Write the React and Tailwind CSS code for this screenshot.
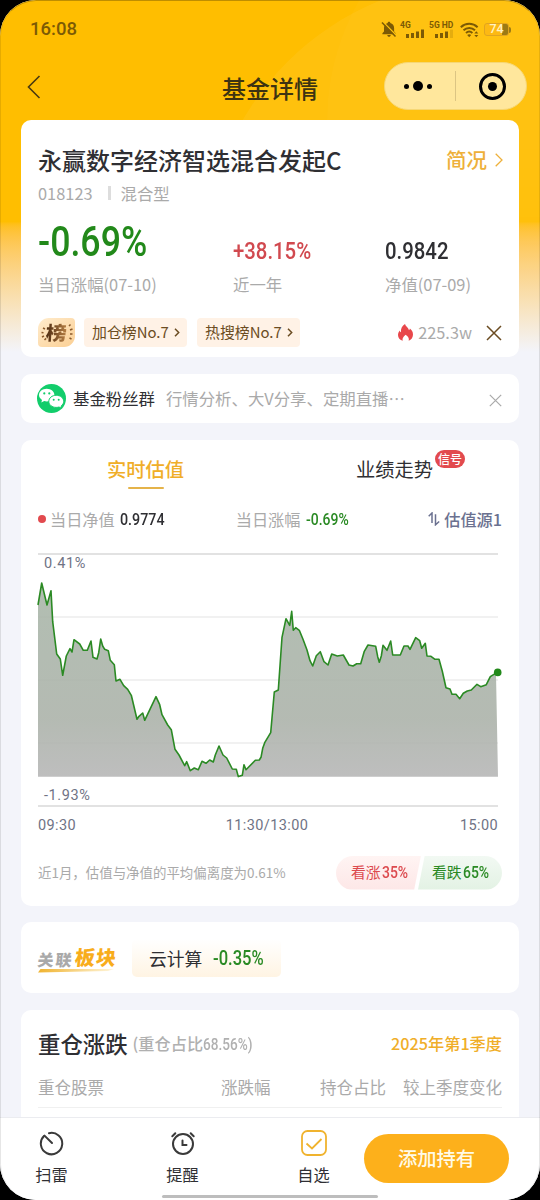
import clsx from 'clsx';

const GRID_LINES = [0, 63, 126, 189, 252];

const CHART_POINTS = [
  [0, 51], [3.7, 29], [9, 51], [13, 36.7], [14.7, 67.7], [18.7, 100], [22.3, 105], [24.7, 121.3],
  [28.3, 102], [32, 94.7], [34, 98], [36, 85.7], [41.7, 90], [45.3, 96.3], [49.3, 96.3], [53, 87],
  [55, 103.3], [59, 105], [60.7, 98.7], [62.7, 85], [64.7, 92], [66.7, 95.3], [70.3, 96.7], [72.3, 106.3],
  [76.3, 110.7], [78, 127], [82, 125.3], [85.7, 131.7], [89.7, 135.3], [93.3, 141.3], [99, 165.3],
  [101, 162.3], [104.7, 159], [106.7, 166.3], [118, 142.7], [121.7, 150.7], [124, 160.7], [129.7, 171],
  [133.3, 175.7], [137, 195.3], [141, 201], [146.7, 211.7], [148.7, 207.7], [152.3, 216.7], [156.3, 214],
  [160.3, 215.7], [164, 207.3], [168, 209.3], [171.7, 206], [175.3, 208], [177.3, 201], [181, 192],
  [185, 201], [188.7, 204], [194.3, 215], [198.3, 215.3], [200.3, 222.6], [204.3, 221.3], [206, 210.7],
  [208, 215.7], [217.3, 206.3], [221.3, 206], [223, 203.3], [224.7, 194.3], [226.7, 188.7], [232.7, 178.7],
  [236.3, 138], [240.3, 136], [244, 83.3], [248, 64.7], [251.7, 71.3], [253.7, 57.3], [255.3, 76.3],
  [257.7, 73.7], [261.3, 76.3], [265, 85.3], [269, 96], [272, 106.7], [274.7, 112], [278.3, 101.7],
  [282.3, 97.7], [286, 107.7], [290, 111], [293.7, 100], [299.3, 102], [305.3, 101], [311, 111],
  [315, 112], [318.7, 109.7], [322.7, 109.7], [326.3, 97.3], [330, 91], [337.7, 92.3], [339.7, 102.7],
  [341.3, 108.3], [343.3, 102], [345, 91.3], [349, 96.3], [352.7, 87], [354.7, 101], [362.3, 101],
  [366, 92], [370, 92], [372, 95.3], [377.7, 83.7], [381.7, 86.7], [383.7, 94.3], [387.3, 89.3],
  [389, 102], [393, 102.3], [397, 105.3], [401, 105.3], [404.3, 117.3], [408, 133.7], [412, 135],
  [414, 140.3], [418, 140.3], [421.7, 144.7], [425.3, 139.3], [429.3, 137], [433.3, 136], [439, 130.3],
  [442.7, 132.7], [448.3, 130.7], [452.3, 122.7], [457.5, 119.3],
];

const Card = ({ className, children }) => (
  <section className={clsx('mx-[21px] rounded-[10px] bg-white', className)}>{children}</section>
);

// Condensed numerals
const Num = ({ className, children }) => (
  <span className={clsx("inline-block origin-left whitespace-nowrap font-['Roboto'] leading-none", className)}>
    {children}
  </span>
);

const SignalBars = ({ last = 1 }) => (
  <svg width="18" height="9" viewBox="0 0 18 9" fill="#7c5a05">
    <rect x="0" y="5" width="3" height="4" />
    <rect x="5" y="4" width="3" height="5" />
    <rect x="10" y="2.5" width="3" height="6.5" />
    <rect x="15" y="0.5" width="3" height="8.5" opacity={last} />
  </svg>
);

const StatusBar = () => (
  <div className="flex h-[60px] items-center justify-between pr-[29px] pb-px pl-[30px] font-['Roboto'] text-[#7c5a05]">
    <span className="text-[18.5px] leading-none font-medium">16:08</span>
    <div className="flex items-center">
      <svg width="16" height="17" viewBox="0 0 16 17" className="mr-[4px]">
        <path d="M8 .8c.8 0 1.3.5 1.3 1.2 2.4.6 3.8 2.4 3.8 5v3.6l1.5 1.7v.9H1.4v-.9L3 10.6V7c0-2.6 1.3-4.4 3.700-5C6.700 1.300 7.200.8 8 .8zM6.300 14h3.400c0 1-.7 1.800-1.700 1.800S6.300 15 6.300 14z" fill="#7c5a05" />
        <path d="M1.500 0.500l14 14" stroke="#ffc30c" strokeWidth="1.500" />
        <path d="M1 1.500l13.500 14" stroke="#7c5a05" strokeWidth="1.500" />
      </svg>
      <div className="flex h-[17px] w-[24px] flex-col justify-between">
        <span className="-ml-[1px] text-[8.5px] leading-[8px] font-bold">4G</span>
        <div className="ml-[5px]"><SignalBars /></div>
      </div>
      <div className="ml-[4px] flex h-[17px] w-[26px] flex-col justify-between whitespace-nowrap">
        <span className="text-[8.5px] leading-[8px] font-bold">5G HD</span>
        <div className="ml-[6px]"><SignalBars last={0.2} /></div>
      </div>
      <svg width="19" height="16" viewBox="0 0 19 16" className="ml-[5px]" fill="none" stroke="#7c5a05" strokeWidth="2">
        <path d="M.8 5.300C5.600.7 12.800.7 17.600 5.300" />
        <path d="M3.500 8.300c3.300-3.100 8.200-3.100 11.500 0" />
        <path d="M6 11c1.900-1.700 4.500-1.700 6.400 0" />
        <path d="M9.200 15.300l-2-2.300c1.200-1 2.800-1 4 0z" fill="#7c5a05" stroke="none" />
        <path d="M16.300 9.300l2 2.300h-4zM16.300 15.300l-2-2.300h4z" fill="#7c5a05" stroke="none" />
      </svg>
      <div className="ml-[5px] flex items-center">
        <div className="flex h-[13px] w-[25px] items-center justify-center rounded-[3px] border border-[#e0a420] bg-linear-to-r from-[#fdb913] from-75% to-[#9c7a14] to-75% text-[12.5px] leading-none font-medium text-[#fff3c4]">
          74
        </div>
        <div className="h-[6px] w-[2px] rounded-r-sm bg-[#9c7a14]" />
      </div>
    </div>
  </div>
);

const NavBar = () => (
  <div className="grid h-[60px] grid-cols-[1fr_auto_1fr] items-center pr-[13px] pl-[27px]">
    <svg width="14" height="24" viewBox="0 0 14 24" fill="none" stroke="#4a3a10" strokeWidth="1.600" className="-mt-[6px]">
      <path d="M12.500 1L1.500 12l11 11" />
    </svg>
    <h1 className="-mt-[4px] mr-[14px] text-[24px] leading-none font-medium text-[#3d3312]">基金详情</h1>
    <div className="-mt-[8px] flex h-[48px] w-[143px] items-center justify-self-end rounded-full border border-[#f6d775] bg-[#ffe79c]">
      <div className="flex flex-1 items-center justify-center gap-[4px] border-r border-[#dcc583] py-[10px] pr-[3px]">
        <i className="size-[5px] rounded-full bg-black" />
        <i className="size-[10px] rounded-full bg-black" />
        <i className="size-[5px] rounded-full bg-black" />
      </div>
      <div className="flex flex-1 justify-center pl-[4px]">
        <div className="flex size-[27px] items-center justify-center rounded-full border-[3px] border-black">
          <i className="size-[9px] rounded-full bg-black" />
        </div>
      </div>
    </div>
  </div>
);

const RankChip = ({ children }) => (
  <div className="flex h-[29px] w-[103px] items-center gap-[5px] rounded-[4px] bg-[#fff2e6] pl-[8px] text-[14.9px] leading-none whitespace-nowrap text-[#6b4c22]">
    {children}
    <svg width="6" height="9" viewBox="0 0 6 9" fill="none" stroke="#6b4c22" strokeWidth="1.500">
      <path d="M1 .7l3.700 3.800L1 8.300" />
    </svg>
  </div>
);

const Cross = ({ size, color, width }) => (
  <svg width={size} height={size} viewBox="0 0 16 16" fill="none" stroke={color} strokeWidth={width}>
    <path d="M1 1l14 14M15 1L1 15" />
  </svg>
);

const FundCard = () => (
  <Card className="h-[237px] px-[17px] pt-[28px]">
    <div className="flex h-[24px] items-center justify-between">
      <h2 className="text-[24px] leading-none font-medium whitespace-nowrap text-[#2f2f33]">永赢数字经济智选混合发起C</h2>
      <div className="-mr-px flex items-center gap-[8px] text-[20.5px] leading-none font-medium text-[#eeb03a]">
        <span className="-mt-[2px]">简况</span>
        <svg width="8" height="14" viewBox="0 0 8 14" fill="none" stroke="#eeb03a" strokeWidth="1.300">
          <path d="M.7.7L7 7 .7 13.300" />
        </svg>
      </div>
    </div>
    <div className="mt-[12px] flex h-[18px] items-center text-[16.4px] leading-none text-[#aaaaaa]">
      018123
      <i className="mr-[10px] ml-[15px] h-[14px] w-[3px] bg-[#dddddd]" />
      混合型
    </div>
    <div className="mt-[15px] grid grid-cols-[195px_152px_1fr]">
      <div className="flex h-[46px] items-end">
        <Num className="scale-x-[0.850] text-[42px] font-medium text-[#22891a]">-0.69%</Num>
      </div>
      <div className="flex h-[46px] items-end">
        <Num className="scale-x-[0.830] text-[24.500px] font-medium text-[#d1494f]">+38.15%</Num>
      </div>
      <div className="flex h-[46px] items-end">
        <Num className="scale-x-[0.830] text-[24.500px] font-medium text-[#2f2f33]">0.9842</Num>
      </div>
    </div>
    <div className="mt-[12px] grid grid-cols-[195px_152px_1fr] text-[16.4px] leading-[18px] text-[#aaaaaa]">
      <span>当日涨幅(07-10)</span>
      <span>近一年</span>
      <span>净值(07-09)</span>
    </div>
    <div className="mt-[25px] flex h-[29px] items-center">
      <div className="relative flex h-[29px] w-[37px] shrink-0 items-center justify-center overflow-hidden rounded-tl-[11px] rounded-tr-[4px] rounded-br-[11px] rounded-bl-[4px] bg-linear-to-br from-[#ffeccd] to-[#fbcf93]">
        <span className="-mt-[2px] -skew-x-3 scale-x-110 bg-linear-to-r from-[#4e2c12] to-[#b98246] bg-clip-text text-[19px] leading-[22px] font-black text-transparent">榜</span>
        <svg width="37" height="29" viewBox="0 0 37 29" className="absolute inset-0" fill="none" stroke="#8a5a2c" strokeWidth="1.500">
          <path d="M5 10l2 1M3.500 14.500l2 .3M4 19l2-1M6.500 22l1.600-1.600M31 8l1.500-1.500M32 12l2.500-1M32 16h2.500M31.500 20l2 1" />
        </svg>
      </div>
      <div className="ml-[9px] flex gap-[10px]">
        <RankChip>加仓榜No.7</RankChip>
        <RankChip>热搜榜No.7</RankChip>
      </div>
      <div className="ml-auto flex items-center text-[16.300px] leading-none text-[#aaaaaa]">
        <svg width="15" height="17" viewBox="0 0 15 17" className="mr-[5px]">
          <path d="M7 0c.6 2.500 3.500 3.500 4 6.300.6-.4.8-1 .9-1.700C13.700 6 15 8 15 10.500c0 3-1.700 5.300-4.300 6.300.7-2.300-.5-4.300-3.200-6-1.600 1.800-3.700 3.600-2.600 6C1.800 16 0 13.800 0 11c0-2 .8-3.300 1.800-4.600.2 1 .5 1.500 1.100 1.900C2.700 4.500 4.200 1.500 7 0z" fill="#e8474b" />
        </svg>
        225.3w
      </div>
      <div className="ml-[14px]"><Cross size={16} color="#6b4c22" width={1.500} /></div>
    </div>
  </Card>
);

const GroupCard = () => (
  <Card className="mt-[17px] flex h-[49px] items-center pr-[17px] pl-[16px] text-[16.400px] leading-none whitespace-nowrap">
    <svg width="29" height="29" viewBox="0 0 29 29">
      <circle cx="14.500" cy="14.500" r="14.500" fill="#12cd6b" />
      <path d="M9.700 4.800c4.300 0 7.700 2.800 7.700 6.300s-3.400 6.300-7.700 6.300c-.9 0-1.700-.1-2.500-.3L4.300 18.600l.7-2.700C3.200 14.800 2 13 2 11.100c0-3.500 3.400-6.300 7.700-6.300z" fill="#fff" />
      <path d="M19.200 11.300c4.300 0 7.500 2.700 7.500 6.100 0 1.900-1 3.500-2.600 4.600l.6 2.300-2.700-1.300c-.9.3-1.800.4-2.800.4-4.200 0-7.400-2.600-7.400-6s3.200-6.100 7.400-6.100z" fill="#fff" stroke="#12cd6b" strokeWidth="1" />
      <g fill="#12cd6b">
        <circle cx="7.300" cy="9.400" r="1.100" />
        <circle cx="12.300" cy="9.400" r="1.100" />
        <circle cx="16.700" cy="15.800" r="1" />
        <circle cx="21.700" cy="15.800" r="1" />
      </g>
    </svg>
    <span className="ml-[7px] text-[#2f2f33]">基金粉丝群</span>
    <span className="ml-[11px] text-[#aaaaaa]">行情分析、大V分享、定期直播…</span>
    <div className="ml-auto pt-[3px]"><Cross size={13} color="#aaaaaa" width={1.500} /></div>
  </Card>
);

const ValuationChart = () => {
  const line = CHART_POINTS.map((p) => p.join(',')).join(' ');
  return (
    <div className="relative mt-[24px] h-[253px] font-['Roboto'] text-[14.500px] leading-none tracking-[0.600px] text-[#6f7385]">
      <svg width="466" height="254" viewBox="0 0 466 254" className="overflow-visible">
        <defs>
          <linearGradient id="area" x1="0" y1="0" x2="0" y2="1">
            <stop offset="0" stopColor="#a7b5a7" />
            <stop offset="0.700" stopColor="#aab1a8" />
            <stop offset="1" stopColor="#b5b5b5" />
          </linearGradient>
        </defs>
        {GRID_LINES.map((y) => (
          <line key={y} x1="0" x2="460" y1={y} y2={y} stroke={y === 0 || y === 252 ? '#d8d8d8' : '#ececec'} strokeWidth="1.300" />
        ))}
        <polygon points={`0,222.700 ${line} 458,120 460,222.700`} fill="url(#area)" opacity="0.880" />
        <polyline points={line} fill="none" stroke="#2b8a24" strokeWidth="1.600" strokeLinejoin="round" />
        <circle cx="459.700" cy="118.400" r="3.800" fill="#22891a" />
      </svg>
      <span className="absolute top-[3px] left-[6px]">0.41%</span>
      <span className="absolute top-[235px] left-[6px]">-1.93%</span>
    </div>
  );
};

const ValuationCard = () => (
  <Card className="mt-[17px] h-[466px] pr-[17px] pl-[17px] pt-[19px]">
    <div className="flex h-[30px] items-start text-[19.300px] leading-[20px]">
      <div className="flex w-[215px] flex-col items-center font-medium text-[#f0ae28]">
        实时估值
        <i className="mt-[8px] h-[2px] w-[36px] rounded-full bg-[#e5b34a]" />
      </div>
      <div className="relative ml-[103px] text-[#2f2f33]">
        业绩走势
        <span className="absolute -top-[9px] left-[79px] flex h-[18px] w-[30px] items-center justify-center rounded-full bg-[#e24a4e] pb-px text-[12px] leading-none font-medium text-white">信号</span>
      </div>
    </div>
    <div className="mt-[20px] flex h-[20px] items-center text-[16.200px] leading-none whitespace-nowrap text-[#aaaaaa]">
      <i className="mr-[4px] size-[8px] rounded-full bg-[#e24a4e]" />
      当日净值
      <Num className="ml-[5px] w-[116px] scale-x-[0.840] text-[17px] font-medium text-[#2f2f33]">0.9774</Num>
      当日涨幅
      <Num className="ml-[5px] scale-x-[0.820] text-[17px] font-medium text-[#2a8a24]">-0.69%</Num>
      <div className="ml-auto flex items-center gap-[4px] font-medium text-[#6b7190]">
        <svg width="12" height="14" viewBox="0 0 12 14" fill="none" stroke="#6b7190" strokeWidth="1.500">
          <path d="M.7 4.200L4 1v10M7.500 2.300v10.500l3.700-3.300" />
        </svg>
        估值源1
      </div>
    </div>
    <div className="pt-px"><ValuationChart /></div>
    <div className="mt-[12px] flex w-[460px] justify-between font-['Roboto'] text-[14.500px] leading-none tracking-[0.400px] text-[#6f7385]">
      <span>09:30</span>
      <span className="-ml-[2px]">11:30/13:00</span>
      <span>15:00</span>
    </div>
    <div className="mt-[22px] flex h-[34px] items-center justify-between whitespace-nowrap">
      <span className="text-[13.450px] leading-none text-[#aaaaaa]">近1月，估值与净值的平均偏离度为0.61%</span>
      <div className="flex text-[14.800px] leading-none">
        <div className="flex h-[34px] w-[85px] items-center rounded-l-full bg-linear-to-b from-[#fff4f3] to-[#fde7e7] pl-[15px] text-[#dc4a4e] [clip-path:polygon(0_0,100%_0,92%_100%,0_100%)]">
          看涨
          <Num className="ml-px scale-x-[0.820] text-[17px] font-medium">35%</Num>
        </div>
        <div className="-ml-[3px] flex h-[34px] w-[84px] items-center rounded-r-full bg-linear-to-b from-[#f2f9f3] to-[#e3f2e4] pl-[14px] text-[#2a8a24] [clip-path:polygon(8%_0,100%_0,100%_100%,0_100%)]">
          看跌
          <Num className="ml-px scale-x-[0.820] text-[17px] font-medium">65%</Num>
        </div>
      </div>
    </div>
  </Card>
);

const SectorCard = () => (
  <Card className="mt-[16px] flex h-[71px] items-center px-[17px]">
    <div className="relative mt-[5px] flex h-[26px] w-[78px] items-start whitespace-nowrap">
      <span className="-skew-x-6 pt-[4px] text-[16px] leading-none font-black tracking-[2px] text-[#a9a9a9]">关联</span>
      <span className="ml-[1px] -skew-x-6 text-[20px] leading-none font-black tracking-[1px] text-[#f8ad1c]">板块</span>
      <svg width="76" height="5" viewBox="0 0 76 5" className="absolute bottom-[0px] left-0">
        <defs>
          <linearGradient id="swoosh">
            <stop offset="0" stopColor="#f0b32e" />
            <stop offset="1" stopColor="#fff6dd" />
          </linearGradient>
        </defs>
        <path d="M2.500 1H76L70 3 0 4.500z" fill="url(#swoosh)" />
      </svg>
    </div>
    <div className="ml-[16px] flex h-[38px] w-[149px] items-center rounded-[5px] bg-linear-to-b from-white to-[#fff4e3] pl-[17px] text-[17.800px] leading-none text-[#2f2f33]">
      <span className="pt-[2px]">云计算</span>
      <Num className="ml-[11px] scale-x-[0.850] pt-[2px] text-[19.500px] font-medium text-[#2a8a24]">-0.35%</Num>
    </div>
  </Card>
);

const HoldingsCard = () => (
  <Card className="mt-[17px] h-[107px] rounded-b-none px-[17px] pt-[21px]">
    <div className="flex h-[24px] items-center whitespace-nowrap">
      <h3 className="text-[22.400px] leading-none font-medium text-[#2f2f33]">重仓涨跌</h3>
      <div className="ml-[5px] flex items-center text-[16.200px] leading-none font-medium text-[#b0b0b0]">
        (重仓占比<Num className="w-[44px] scale-x-[0.800] pt-[2px] text-[17px]">68.56%)</Num>
      </div>
      <span className="ml-auto text-[16.200px] leading-none font-medium text-[#f0ae28]">2025年第1季度</span>
    </div>
    <div className="mt-[22px] flex h-[20px] items-center text-[16.500px] leading-none text-[#aaaaaa]">
      <span className="w-[183px]">重仓股票</span>
      <span>涨跌幅</span>
      <span className="ml-auto">持仓占比</span>
      <span className="ml-[17px]">较上季度变化</span>
    </div>
    <div className="mt-[10px] h-px bg-[#f0f0f0]" />
  </Card>
);

const TabItem = ({ label, children }) => (
  <button className="flex w-[131px] flex-col items-center gap-[10px] text-[16.200px] leading-none text-[#2f2f33]">
    {children}
    {label}
  </button>
);

const BottomBar = () => (
  <footer className="relative h-[83px] border-t border-[#ebecf0] bg-white">
    <div className="flex">
      <div className="-mr-[20px] -ml-[14px] flex shrink-0 pt-[12px]">
        <TabItem label="扫雷">
          <svg width="26" height="26" viewBox="0 0 26 26" fill="none" stroke="#3a3a3a" strokeWidth="2" strokeLinecap="round">
            <path d="M10 3.200A10.700 10.700 0 1 1 5 6" />
            <path d="M5.500 5.600L13 13" />
          </svg>
        </TabItem>
        <TabItem label="提醒">
          <svg width="26" height="26" viewBox="0 0 26 26" fill="none" stroke="#3a3a3a" strokeWidth="2" strokeLinecap="round">
            <circle cx="13" cy="14" r="10" />
            <path d="M12.500 10.500v4.500h4M2.300 6.300l3-3M23.700 6.300l-3-3" />
          </svg>
        </TabItem>
        <TabItem label="自选">
          <svg width="26" height="26" viewBox="0 0 26 26" fill="none" stroke="#f0b32e" strokeWidth="1.800">
            <rect x="1" y="1" width="24" height="24" rx="5.500" />
            <path d="M5.500 13.500l5.500 5 9.500-9.500" />
          </svg>
        </TabItem>
      </div>
      <button className="mt-[16px] mr-[31px] ml-auto h-[49px] w-[145px] shrink-0 rounded-full bg-[#fdb01b] text-[19.300px] leading-none font-medium text-[#fffbe8]">添加持有</button>
    </div>
    <div className="absolute bottom-[2px] left-[162px] h-[3px] w-[216px] rounded-full bg-[#bdbdbd]" />
  </footer>
);

const App = () => (
  <div className="h-[1200px] w-[540px] overflow-hidden bg-black font-['Noto_Sans_CJK_SC',sans-serif]" lang="zh-CN">
    <div className="relative isolate flex h-[1200px] flex-col overflow-hidden rounded-[36px] bg-[#f3f4fa]">
      <div className="absolute inset-x-0 top-0 -z-10 h-[352px] overflow-hidden bg-linear-to-b from-[#ffbe00] from-63% to-[#f3f4fa]">
        <div className="absolute -top-[20px] left-[205px] size-[560px] rounded-full bg-white/5 mask-b-from-40% mask-b-to-60%" />
        <div className="absolute -top-[120px] left-[327px] size-[480px] rounded-full bg-white/2 mask-b-from-50% mask-b-to-70%" />
      </div>
      <StatusBar />
      <NavBar />
      <FundCard />
      <GroupCard />
      <ValuationCard />
      <SectorCard />
      <HoldingsCard />
      <BottomBar />
      <div className="pointer-events-none absolute inset-0 rounded-[36px] border-x border-t border-black/10 border-t-black/25" />
    </div>
  </div>
);

export default App;
